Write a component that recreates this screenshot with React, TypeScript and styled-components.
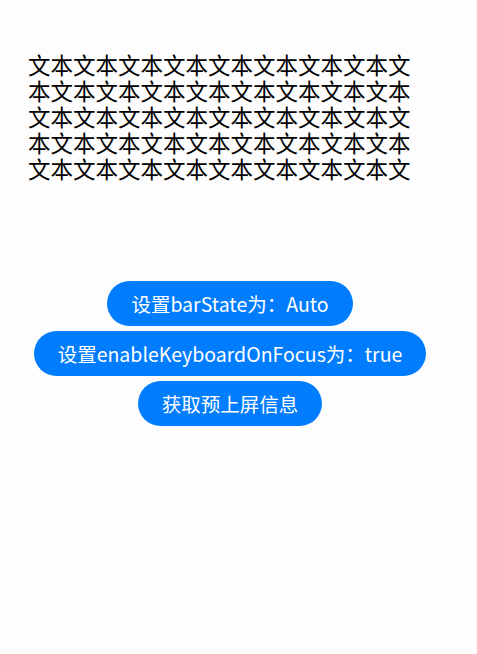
import React from "react";
import styled, { createGlobalStyle } from "styled-components";

const Global = createGlobalStyle`
  html, body {
    margin: 0;
    padding: 0;
    background: #fdfdfd;
  }
  body {
    font-family: "Noto Sans CJK SC", "Noto Sans", sans-serif;
  }
`;

const Page = styled.div`
  width: 477px;
  height: 654px;
  background: #fdfdfd;
  display: flex;
  flex-direction: column;
  overflow: hidden;
`;

const TextBlock = styled.div`
  margin: 51px 0 0 28px;
  width: 395px;
  font-family: "Noto Sans CJK SC", sans-serif;
  font-size: 22.5px;
  line-height: 26px;
  color: #000;
  word-break: break-all;
`;

const ButtonColumn = styled.div`
  margin-top: 100px;
  width: 460px;
  display: flex;
  flex-direction: column;
  align-items: center;
  gap: 5px;
`;

const PillButton = styled.button`
  height: 45px;
  padding: 0 24px;
  border: none;
  border-radius: 22.5px;
  background: #007dff;
  color: #fff;
  font-family: "Noto Sans CJK SC", sans-serif;
  font-size: 19.5px;
  font-weight: 400;
  white-space: nowrap;
  cursor: pointer;
`;

const longText = "文本".repeat(42) + "文";

export default function App() {
  return (
    <>
      <Global />
      <Page>
        <TextBlock>{longText}</TextBlock>
        <ButtonColumn>
          <PillButton>设置barState为：Auto</PillButton>
          <PillButton>设置enableKeyboardOnFocus为：true</PillButton>
          <PillButton>获取预上屏信息</PillButton>
        </ButtonColumn>
      </Page>
    </>
  );
}
